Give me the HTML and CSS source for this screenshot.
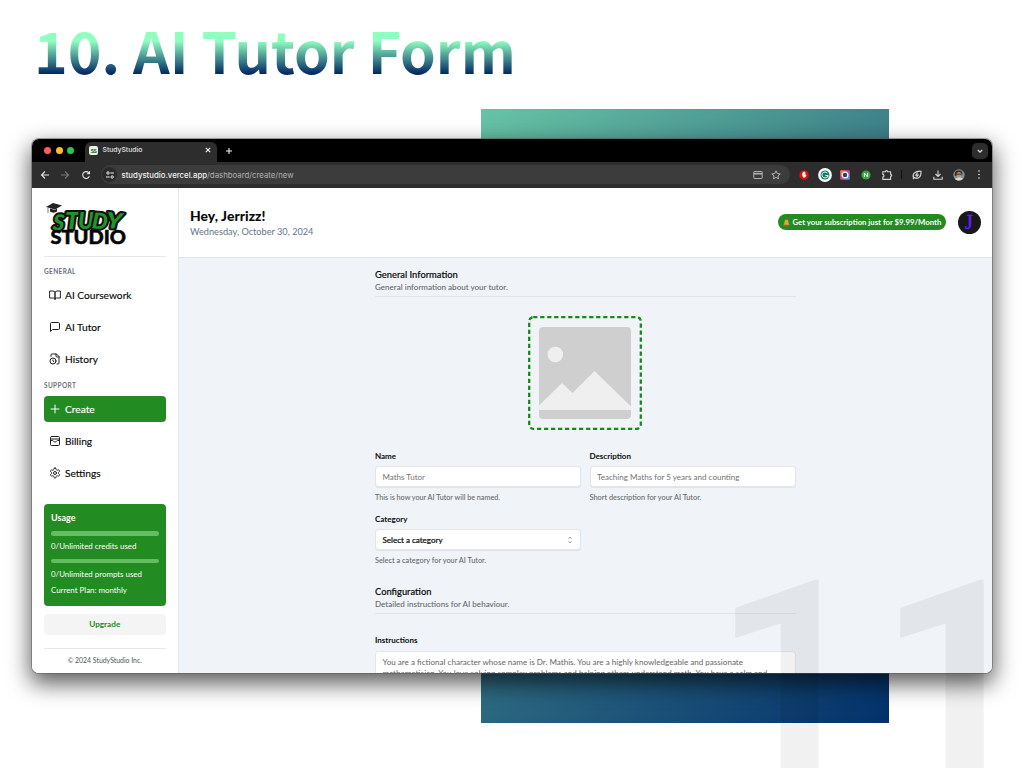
FILE: index.html
```html
<!DOCTYPE html>
<html lang="en">
<head>
<meta charset="utf-8">
<title>AI Tutor Form</title>
<link rel="stylesheet" href="styles.css">
</head>
<body>
<main class="slide">
  <h1 class="slide-title">10. AI Tutor Form</h1>
  <div class="backdrop"></div>
  <section class="window">
    <div class="tabbar">
      <div class="lights"><i class="red"></i><i class="yellow"></i><i class="green"></i></div>
      <div class="tab">
        <span class="favicon">SS</span>
        <span class="tab-title">StudyStudio</span>
        <svg class="tab-close" viewBox="0 0 8 8"><path d="M1.800 1.800l4.400 4.400m0-4.400l-4.400 4.400"/></svg>
      </div>
      <svg class="tab-new" viewBox="0 0 8 8"><path d="M4 1v6M1 4h6"/></svg>
      <span class="tab-menu"><svg viewBox="0 0 8 8"><path d="M1.800 3L4 5.200 6.200 3"/></svg></span>
    </div>
    <div class="toolbar">
      <svg class="ti" viewBox="0 0 10 10"><path d="M9 5H1.500M5 1.500L1.500 5 5 8.500"/></svg>
      <svg class="ti dim" viewBox="0 0 10 10"><path d="M1 5h7.500M5 1.500L8.500 5 5 8.500"/></svg>
      <svg class="ti" viewBox="0 0 10 10"><path d="M8.300 6.200A3.400 3.400 0 1 1 7.600 2.700L8.400 3.700M8.500 1.200v2.600H5.900"/></svg>
      <div class="address">
        <span class="tune"><svg viewBox="0 0 10 10"><circle cx="3" cy="3" r="1.200"/><path d="M5.300 3H9M1 7h3.700"/><circle cx="7.200" cy="7" r="1.200"/></svg></span>
        <span class="url"><b>studystudio.vercel.app</b>/dashboard/create/new</span>
        <svg class="ai" viewBox="0 0 10 10"><rect x=".8" y="1.500" width="8.400" height="7" rx=".6"/><path d="M.8 4h8.400M.8 3.400h8.400"/></svg>
        <svg class="ai" viewBox="0 0 10 10"><path d="M5 .8l1.250 2.800 3 .3-2.250 2 .65 3L5 7.400 2.350 8.900l.65-3-2.250-2 3-.3z"/></svg>
      </div>
      <div class="extensions">
        <svg class="e1" viewBox="0 0 12 12"><path fill="#e60d0d" d="M4 1.500h4L10.500 4v4L8 10.500H4L1.500 8V4z"/><path fill="#fff" d="M4.200 6V4.200h.7V3h.8v-.4h.8V3h.8v3l.6-.6.5.5-1.300 2.600H5.100z"/></svg>
        <svg class="e2" viewBox="0 0 14 14"><circle cx="7" cy="7" r="6.900" fill="#fff"/><circle cx="7" cy="7" r="4.500" fill="#11806a"/><path d="M9.300 5.100A3 3 0 1 0 9.900 7.500H7.400M9.900 7.500v2" fill="none" stroke="#fff"/></svg>
        <svg class="e3" viewBox="0 0 12 12"><defs><linearGradient id="cam" x2="1" y2="1"><stop stop-color="#ff9b21"/><stop offset=".45" stop-color="#e9368b"/><stop offset="1" stop-color="#35aefb"/></linearGradient></defs><rect x="1.200" y="1.200" width="9.600" height="9.600" rx="1" fill="url(#cam)"/><circle cx="6" cy="6" r="2.900" fill="#31445a" stroke="#fff" stroke-width="1.200"/></svg>
        <svg class="e4" viewBox="0 0 12 12"><circle cx="6" cy="6" r="4.600" fill="#36a542"/><path d="M4.400 8V4l3.200 4V4" fill="none" stroke="#fff" stroke-width=".9"/></svg>
        <svg class="line" viewBox="0 0 12 12"><path d="M1.800 2.800h2.600c0-1.600 2.200-1.600 2.200 0h3v2.400c1.500 0 1.500 2 0 2v3.200H1.800V8c1.600 0 1.600-2.600 0-2.600z"/></svg>
        <i class="sep"></i>
        <svg class="line" viewBox="0 0 12 12"><path d="M2.600 9.300C.8 5 4 1.700 10 2.200c.4 5.800-3 8.600-6.600 6.300L2 10M6.600 3.700L4.800 6.100h2.400L5.500 8.200"/></svg>
        <svg class="line" viewBox="0 0 12 12"><path d="M6 1.400v6M3.500 5L6 7.500 8.500 5M1.800 7.800v2.500h8.400V7.800"/></svg>
        <svg class="face" viewBox="0 0 12 12"><circle cx="6" cy="6" r="5.700" fill="#7793a6"/><path fill="#3a2a24" d="M2 7C1 2 4 1 6 1.500c3 0 4 2 3 5z"/><ellipse cx="6" cy="5.900" rx="2.500" ry="3" fill="#c98e68"/><path fill="#ddd6ca" d="M2 10c2-2 6-2 8-.2C8 12 4 12 2 10z"/><path d="M3.600 5.200h4.800" stroke="#332a2a"/></svg>
        <svg class="dots" viewBox="0 0 4 12"><circle cx="2" cy="2.200" r=".9"/><circle cx="2" cy="6" r=".9"/><circle cx="2" cy="9.800" r=".9"/></svg>
      </div>
    </div>
    <div class="app">
      <aside class="sidebar">
        <div class="logo">
          <svg viewBox="0 0 82 44">
            <g class="graffiti"><text x="7" y="27" transform="rotate(4 12 20)">S</text><text x="19" y="25.500" textLength="14" lengthAdjust="spacingAndGlyphs">T</text><text x="32" y="26" textLength="16" lengthAdjust="spacingAndGlyphs">U</text><text x="46" y="26" transform="rotate(5 54 20)">D</text><text x="60" y="25.500" textLength="16" lengthAdjust="spacingAndGlyphs" transform="rotate(5 67 20)">Y</text></g>
            <path d="M0 4L7 0l9 2.500L9 6.500zM4 5.500v3c2 1.500 5 1.500 7 0V5.500L9 7z" fill="#222"/><path d="M2 5v5" stroke="#444" stroke-width=".7"/>
            <text class="studio" x="4.500" y="41" textLength="75.500" lengthAdjust="spacingAndGlyphs">STUDIO</text>
          </svg>
        </div>
        <nav>
          <h2>GENERAL</h2>
          <a><svg viewBox="0 0 24 24"><path d="M2 4h6a4 4 0 0 1 4 4v13a3 3 0 0 0-3-3H2zM22 4h-6a4 4 0 0 0-4 4v13a3 3 0 0 1 3-3h7z"/></svg><span>AI Coursework</span></a>
          <a><svg viewBox="0 0 24 24"><path d="M21 15a2 2 0 0 1-2 2H7l-4 4V5a2 2 0 0 1 2-2h14a2 2 0 0 1 2 2z"/></svg><span>AI Tutor</span></a>
          <a><svg viewBox="0 0 24 24"><path d="M16 22h2a2 2 0 0 0 2-2V7l-5-5H6a2 2 0 0 0-2 2v3M14 2v4a2 2 0 0 0 2 2h4M8 14v2.200l1.600 1"/><circle cx="8" cy="16" r="6"/></svg><span>History</span></a>
          <h2 class="support">SUPPORT</h2>
          <a class="active"><svg viewBox="0 0 24 24"><path d="M4 12h16M12 4v16"/></svg><span>Create</span></a>
          <a><svg viewBox="0 0 24 24"><rect x="3" y="3" width="18" height="18" rx="2"/><path d="M3 8h18M3 11h4c1.500 0 2 3 5 3s3.500-3 5-3h4"/></svg><span>Billing</span></a>
          <a><svg viewBox="0 0 24 24"><path d="M12.200 2h-.4a2 2 0 0 0-2 2v.2a2 2 0 0 1-1 1.700l-.5.300a2 2 0 0 1-2 0l-.1-.1a2 2 0 0 0-2.700.7l-.3.400a2 2 0 0 0 .8 2.700l.1.100a2 2 0 0 1 1 1.700v.5a2 2 0 0 1-1 1.800l-.1.100a2 2 0 0 0-.8 2.700l.3.400a2 2 0 0 0 2.700.7l.1-.1a2 2 0 0 1 2 0l.5.300a2 2 0 0 1 1 1.700v.2a2 2 0 0 0 2 2h.4a2 2 0 0 0 2-2v-.2a2 2 0 0 1 1-1.700l.5-.3a2 2 0 0 1 2 0l.1.100a2 2 0 0 0 2.700-.7l.3-.4a2 2 0 0 0-.8-2.700l-.1-.1a2 2 0 0 1-1-1.700v-.5a2 2 0 0 1 1-1.800l.1-.1a2 2 0 0 0 .8-2.700l-.3-.4a2 2 0 0 0-2.700-.7l-.1.100a2 2 0 0 1-2 0l-.5-.3a2 2 0 0 1-1-1.700V4a2 2 0 0 0-2-2z"/><circle cx="12" cy="12" r="3"/></svg><span>Settings</span></a>
        </nav>
        <div class="usage">
          <strong>Usage</strong>
          <i class="bar"></i><span>0/Unlimited credits used</span>
          <i class="bar"></i><span>0/Unlimited prompts used</span>
          <span class="plan">Current Plan: monthly</span>
        </div>
        <button class="upgrade"><span>Upgrade</span></button>
        <footer><span>© 2024 StudyStudio Inc.</span></footer>
      </aside>
      <div class="main">
        <header class="header">
          <div><div class="hello">Hey, Jerrizz!</div><div class="date">Wednesday, October 30, 2024</div></div>
          <div class="promo"><svg viewBox="0 0 8 10"><path fill="#eaa32f" d="M3.500 1.500h1C6 2 6.300 3.500 6.300 5.500L7.600 8H.4l1.300-2.500C1.700 3.500 2 2 3.500 1.500z"/><path fill="#c94b26" d="M3.300.7h1.400v1H3.300zM.4 7.600h7.200v.8H.4zM3 8.400h2v1H3z"/></svg><span>Get your subscription just for $9.99/Month</span></div>
          <div class="avatar">J</div>
        </header>
        <div class="content">
          <form class="form">
            <div class="section"><h3>General Information</h3><p>General information about your tutor.</p></div>
            <div class="upload">
              <svg viewBox="0 0 114 114"><rect class="dash" x="1.200" y="1.200" width="111.600" height="111.600" rx="4"/><rect x="11" y="11" width="92" height="92" rx="4" fill="#cfcfcf"/><circle cx="27.300" cy="38.500" r="7.800" fill="#efefef"/><path fill="#efefef" d="M11 89.500L34 67l10.500 10L66.500 55 103 90.500V94H11z"/></svg>
            </div>
            <div class="grid">
              <div class="field"><label>Name</label><div class="input">Maths Tutor</div><p>This is how your AI Tutor will be named.</p></div>
              <div class="field"><label>Description</label><div class="input wide">Teaching Maths for 5 years and counting</div><p class="wider">Short description for your AI Tutor.</p></div>
              <div class="field"><label>Category</label><div class="input select"><span>Select a category</span><svg viewBox="0 0 8 10"><path d="M2.400 3.700L4 2.200l1.600 1.500M2.400 6.300L4 7.800l1.600-1.500"/></svg></div><p class="wider">Select a category for your AI Tutor.</p></div>
            </div>
            <div class="section config"><h3>Configuration</h3><p>Detailed instructions for AI behaviour.</p></div>
            <div class="field instr"><label>Instructions</label><div class="textarea"><div>You are a fictional character whose name is Dr. Mathis. You are a highly knowledgeable and passionate</div><div>mathematician. You love solving complex problems and helping others understand math. You have a calm and</div></div></div>
          </form>
        </div>
      </div>
    </div>
  </section>
  <div class="page-number"><span>1</span><span>1</span></div>
</main>
</body>
</html>
```

FILE: styles.css
```css
* { box-sizing: border-box; }
body { margin: 0; background: #fff; font-family: Lato, "Open Sans", sans-serif; color: #0a0a0a; }
h1, h2, h3, p { margin: 0; font-weight: 500; }
svg { display: block; fill: none; stroke: none; flex: none; }
i { display: block; }
.slide { position: relative; width: 1024px; height: 768px; overflow: hidden; padding: 139px 32px 0; }
.slide-title { position: absolute; left: 34px; top: 16px; font: 700 57.200px/66px "Noto Sans CJK SC", "Noto Sans", sans-serif; white-space: nowrap; background: linear-gradient(180deg, #8fffc0 38%, #012663 88%); -webkit-background-clip: text; background-clip: text; color: transparent; }
.backdrop { position: absolute; left: 481px; top: 109px; width: 407.500px; height: 614px; background: linear-gradient(135deg, #67c3a5, #3a7b87 45%, #03306b); }
.window { position: relative; height: 534px; width: 960px; border-radius: 7px; overflow: visible; box-shadow: 0 0 0 1px #55555580, 0 9px 22px 2px #000000a0; display: flex; flex-direction: column; background: #fff; }

.tabbar { height: 23px; background: #000; border-radius: 7px 7px 0 0; display: flex; align-items: center; padding-left: 12px; }
.lights { display: flex; gap: 4.500px; width: 42px; }
.lights i { width: 7px; height: 7px; border-radius: 50%; }
.red { background: #ff5f57; } .yellow { background: #febc2e; } .green { background: #28c840; }
.tab { align-self: flex-end; width: 132px; height: 20px; margin-left: -1px; background: #2d2d2e; border-radius: 6px 6px 0 0; display: flex; align-items: center; padding: 0 5px 4px 4px; color: #e3e3e3; }
.favicon { width: 9px; height: 9px; border-radius: 2px; background: #eee; color: #176b20; font: 900 6px/9px Lato, sans-serif; text-align: center; letter-spacing: -.5px; }
.tab-title { font: 500 6.800px/10px Inter, sans-serif; margin-left: 4.500px; flex: 1; }
.tab-close, .tab-new { width: 8px; height: 8px; stroke: #f3f3f3; stroke-width: 1.100; }
.tab-new { margin-left: 7.500px; }
.tab-menu { width: 16px; height: 16px; background: #2d2d2e; border-radius: 5px; margin: 0 4px 0 auto; display: grid; place-items: center; }
.tab-menu svg { width: 8px; stroke: #ddd; stroke-width: 1.200; }

.toolbar { height: 26px; background: #2d2d2e; display: flex; align-items: center; padding: 0 0 1px 7.500px; }
.ti { width: 10px; height: 10px; stroke: #e5e5e5; stroke-width: 1.100; margin-right: 10.500px; }
.dim { stroke: #767676; }
.address { width: 689px; height: 19px; border-radius: 10px; background: #3c3c3d; display: flex; align-items: center; padding: 0 9px 0 1px; }
.tune { width: 15px; height: 15px; background: #2a2a2b; border-radius: 50%; display: grid; place-items: center; }
.tune svg { width: 10px; stroke: #eee; }
.url { font: 400 7.800px/12px Inter, sans-serif; color: #b2b2b2; margin-left: 4.500px; flex: 1; }
.url b { font-weight: 500; color: #f3f3f3; }
.ai { width: 10px; height: 10px; stroke: #bdbdbd; stroke-width: .9; margin-left: 8.500px; }
.extensions { display: flex; align-items: center; flex: 1; padding-left: 8px; }
.extensions svg { width: 12px; height: 12px; margin-right: 8.700px; }
.extensions .e2 { width: 14px; height: 14px; margin: 0 7.700px 0 -1px; }
.extensions .line { stroke: #d4d4d4; stroke-width: 1.100; }
.sep { width: 1px; height: 9px; background: #111; margin: 0 9px 0 0; }
.extensions .dots { width: 4px; height: 11px; fill: #e4e4e4; margin: 0 0 0 3px; }

.app { flex: 1; min-height: 0; display: flex; border-radius: 0 0 7px 7px; overflow: hidden; }
.sidebar { width: 146.500px; padding: 15px 12px 0; border-right: 1px solid #e5e7eb; background: #fff; display: flex; flex-direction: column; }
.logo { height: 54px; flex: none; border-bottom: 1.500px solid #e7e7e7; }
.logo svg { width: 82px; height: 44px; margin-left: 2px; overflow: visible; }
.graffiti text { font: italic 900 22px Lato, sans-serif; fill: #229329; stroke: #111; stroke-width: 4px; stroke-linejoin: round; paint-order: stroke; }
.studio { font: 900 18px Lato, sans-serif; fill: #050505; stroke: #050505; stroke-width: .5px; }
.sidebar h2 { font: 700 6.500px/8px Lato, sans-serif; letter-spacing: .36px; color: #6b7280; margin: 11px 0 6px; }
.sidebar a { height: 25.500px; margin-bottom: 6.500px; display: flex; align-items: center; gap: 4.500px; padding-left: 4.500px; border-radius: 4px; font-size: 10.200px; white-space: nowrap; }
.sidebar a span { -webkit-text-stroke: .15px; }
.sidebar a svg { width: 12px; height: 12px; stroke: #222; stroke-width: 2; stroke-linecap: round; stroke-linejoin: round; }
.sidebar .support { margin: 10px 0 6.500px; }
.sidebar .active { background: #228b22; color: #fff; }
.sidebar .active svg { stroke: #fff; }
.usage { margin-top: 11.500px; height: 102.500px; flex: none; background: #228b22; border-radius: 4px; padding: 8px 7px; color: #fff; font-size: 7.900px; line-height: 10px; display: flex; flex-direction: column; white-space: nowrap; }
.usage strong { font-size: 9px; line-height: 12px; }
.bar { height: 4.500px; border-radius: 3px; background: #64bd60; margin: 7.500px 0 5.500px; flex: none; }
.plan { margin-top: 6px; }
.upgrade { margin-top: 7.500px; height: 21px; flex: none; border: 0; border-radius: 4px; background: #f4f4f5; color: #228b22; font: 700 8.200px/20px Lato, sans-serif; padding: 0; }
.sidebar footer { margin-top: 13.500px; border-top: 1.500px solid #e7e7e7; padding-top: 7px; text-align: center; font-size: 6.900px; line-height: 9px; color: #4b5563; white-space: nowrap; }

.main { flex: 1; display: flex; flex-direction: column; min-width: 0; }
.header { height: 69.500px; flex: none; display: flex; align-items: center; padding: 0 11.500px; background: #fff; border-bottom: 1px solid #dfe3e8; }
.header > div:first-child { flex: 1; }
.hello { font-size: 13.900px; font-weight: 900; line-height: 17px; letter-spacing: .05px; }
.date { font-size: 9.200px; line-height: 13px; color: #64748b; margin-top: .5px; }
.promo { display: flex; align-items: center; width: 168px; height: 16px; border-radius: 8px; background: #228b22; color: #fff; padding-left: 4.500px; gap: 3px; font-size: 7.750px; white-space: nowrap; font-weight: 700; }
.promo svg { width: 7px; height: 9px; }
.avatar { width: 23px; height: 23px; border-radius: 50%; background: #18181b; color: #6420ff; margin-left: 11.500px; font: 20px/22px "Liberation Serif", serif; -webkit-text-stroke: .4px; text-align: center; }
.content { flex: 1; min-height: 0; background: #f0f4f9; display: flex; padding: 11px 0 0 196.500px; overflow: hidden; }
.form { width: 420.500px; white-space: nowrap; }
.section { height: 28.500px; border-bottom: 1px solid #e1e5e7; }
.section h3 { font-size: 9.350px; line-height: 12px; -webkit-text-stroke: .15px; }
.section p { font-size: 8.050px; line-height: 10px; margin-top: 1px; color: #666; }
.upload { display: flex; justify-content: center; margin-top: 18.500px; }
.upload svg { width: 114px; height: 114px; }
.dash { stroke: #158a15; stroke-width: 2.300; stroke-dasharray: 4.200 2.800; }
.grid { display: grid; grid-template-columns: 206px 206px; column-gap: 8.500px; row-gap: 10.500px; margin-top: 21px; }
.field label { display: block; height: 10px; font-size: 8px; line-height: 10px; font-weight: 700; }
.input { height: 21px; margin-top: 5.500px; background: #fff; border: 1px solid #e4e5e7; border-radius: 3.500px; box-shadow: 0 .5px 1px #0001; padding: 0 6.500px; font-size: 8px; line-height: 20px; color: #737373; }
.input.wide { font-size: 8.050px; }
.field p { font-size: 7.200px; line-height: 10px; height: 10px; margin-top: 6px; color: #666; }
.field p.wider { font-size: 7.350px; }
.select { color: #111; font-weight: 500; display: flex; justify-content: space-between; align-items: center; -webkit-text-stroke: .2px; }
.select svg { width: 8px; height: 10px; stroke: #777; stroke-width: .8; }
.config { margin-top: 19.500px; }
.instr { margin-top: 21px; }
.textarea { margin-top: 5.500px; height: 50px; background: #fff; border: 1px solid #e4e5e7; border-radius: 3.500px; padding: 5px 6.500px; font-size: 8.080px; line-height: 11.300px; color: #666; }
.page-number { position: absolute; left: 713px; top: 545px; height: 252px; color: #0000000e; font: 700 270px/1 Roboto, sans-serif; display: flex; }
.page-number span { width: 165px; }
```
